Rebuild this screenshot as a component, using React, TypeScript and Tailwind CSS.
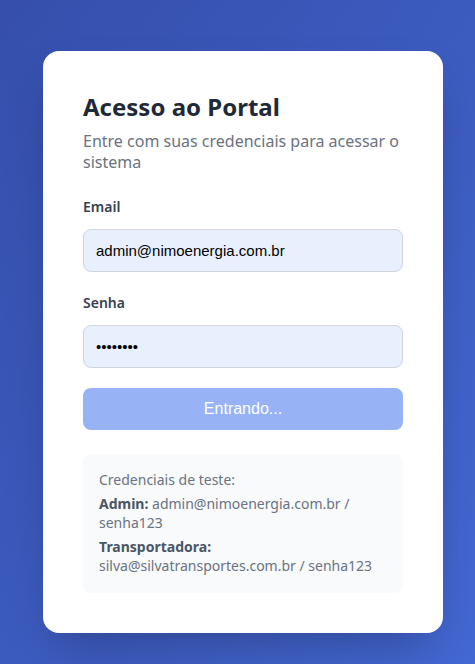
export default function App() {
  return (
    <main className="min-h-screen w-full bg-gradient-to-br from-[#354fab] to-[#4468d4] flex pl-[43px] pt-[51px] pb-8 font-['Noto_Sans',sans-serif]">
      <div className="w-[400px] h-fit bg-white rounded-2xl p-10 shadow-2xl">
        {/* Header */}
        <div className="mb-6">
          <h1 className="text-2xl leading-8 font-bold text-[#1f2937]">Acesso ao Portal</h1>
          <p className="mt-2 text-base leading-[21px] text-[#6b7280]">
            Entre com suas credenciais para acessar o sistema
          </p>
        </div>

        <form className="flex flex-col">
          <label className="block text-sm leading-5 font-semibold text-[#374151] mb-3">Email</label>
          <input
            type="email"
            defaultValue="admin@nimoenergia.com.br"
            className="h-[43px] w-full rounded-lg border border-[#d1d5db] bg-[#e8f0fe] px-3 text-[15px] text-black font-['Liberation_Sans',Arial,sans-serif] outline-none"
          />

          <label className="block text-sm leading-5 font-semibold text-[#374151] mt-[21px] mb-3">Senha</label>
          <input
            type="password"
            defaultValue="senha123"
            className="h-[43px] w-full rounded-lg border border-[#d1d5db] bg-[#e8f0fe] px-3 text-[15px] text-black font-['Liberation_Sans',Arial,sans-serif] outline-none"
          />

          <button
            type="button"
            disabled
            className="mt-5 h-[42px] w-full rounded-lg bg-[#97b3f6] text-white text-base font-['Liberation_Sans',Arial,sans-serif]"
          >
            Entrando...
          </button>
        </form>

        {/* Test credentials */}
        <div className="mt-6 rounded-lg bg-[#f8fafc] px-4 pt-4 pb-[18px] text-sm leading-[19px] text-[#6b7280] flex flex-col gap-[5px]">
          <p>Credenciais de teste:</p>
          <p>
            <strong className="font-bold text-[#4b5563]">Admin:</strong> admin@nimoenergia.com.br / senha123
          </p>
          <p>
            <strong className="font-bold text-[#4b5563]">Transportadora:</strong> silva@silvatransportes.com.br / senha123
          </p>
        </div>
      </div>
    </main>
  );
}
